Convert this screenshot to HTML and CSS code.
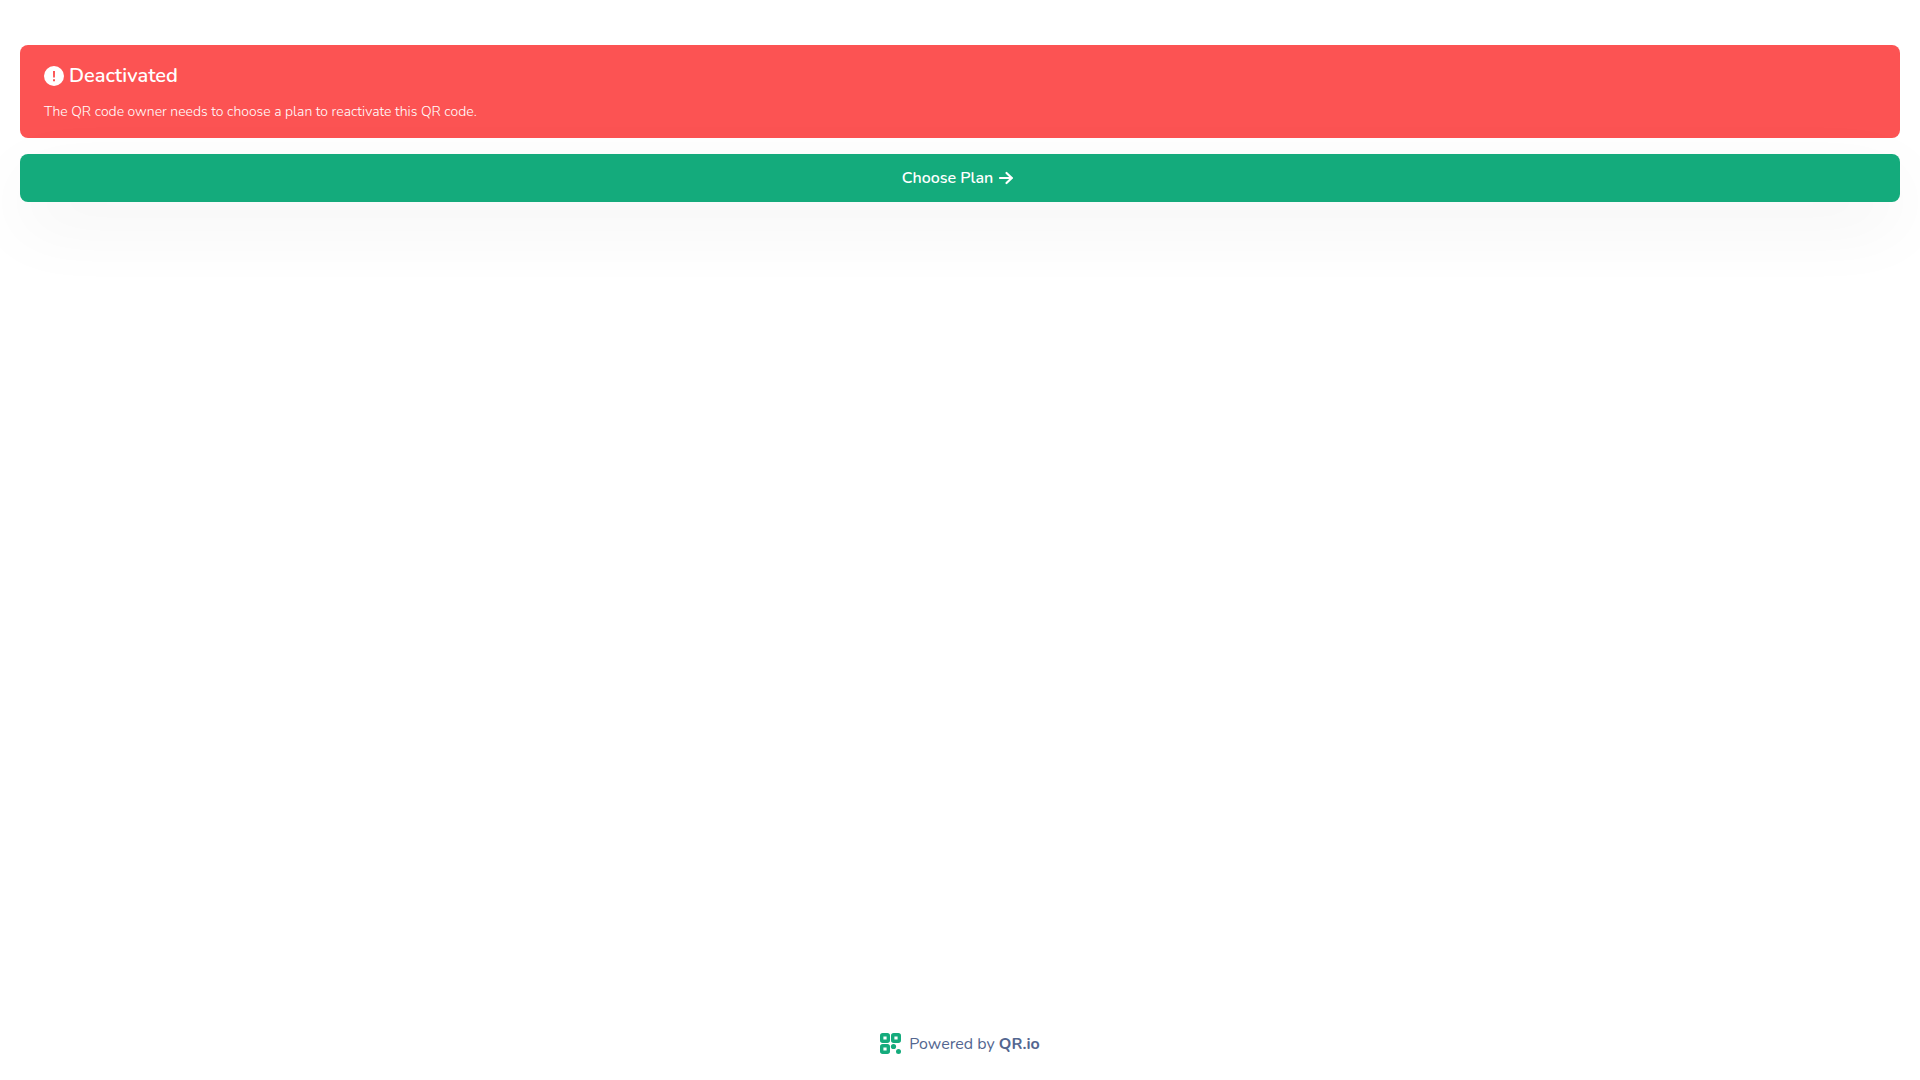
FILE: index.html
```html
<!DOCTYPE html>
<html lang="en">
<head>
<meta charset="utf-8">
<meta name="viewport" content="width=device-width, initial-scale=1">
<title>QR code deactivated</title>
<link rel="stylesheet" href="styles.css">
</head>
<body>
<main class="content">
  <section class="alert" role="alert">
    <h1 class="alert-title">
      <svg class="alert-icon" viewBox="0 0 20 20" aria-hidden="true">
        <circle cx="10" cy="10" r="10" fill="#fff"/>
        <path d="M9 5h2l-.1 6.500H9.100zM9 13.200h2v2H9z" fill="#fc5353"/>
      </svg>
      Deactivated
    </h1>
    <p class="alert-text">The QR code owner needs to choose a plan to reactivate this QR code.</p>
  </section>
  <button class="plan-button" type="button">
    Choose Plan
    <svg class="arrow" viewBox="0 0 16 14" aria-hidden="true">
      <path d="M2 7h12M8.500 2l5.300 5-5.300 5" fill="none" stroke="#fff" stroke-width="2.200" stroke-linecap="round" stroke-linejoin="round"/>
    </svg>
  </button>
</main>
<footer class="footer">
  <a class="brand" href="#">
    <svg class="logo" viewBox="0 0 21 22" aria-hidden="true">
      <g fill="none" stroke="#14ab7c" stroke-width="3.400">
        <rect x="1.700" y="1.700" width="6.600" height="6.600" rx="1"/>
        <rect x="12.700" y="1.700" width="6.600" height="6.600" rx="1"/>
        <rect x="1.700" y="12.700" width="6.600" height="6.600" rx="1"/>
      </g>
      <g fill="#14ab7c">
        <circle cx="13.500" cy="13.500" r="2.600"/>
        <circle cx="18.500" cy="18.500" r="2.500"/>
      </g>
    </svg>
    <span>Powered by <strong>QR.io</strong></span>
  </a>
</footer>
</body>
</html>
```

FILE: styles.css
```css
* {
  box-sizing: border-box;
}

body {
  display: flex;
  flex-direction: column;
  min-height: 100vh;
  margin: 0;
  background: #fff;
  font-family: Nunito, Lato, sans-serif;
  font-size: 16px;
  line-height: 24px;
}

.content {
  display: flex;
  flex: 1;
  flex-direction: column;
  gap: 16px;
  padding: 45px 20px 0;
}

.alert {
  padding: 17px 24px 14px;
  border-radius: 8px;
  background: #fc5353;
  color: #fff;
}

.alert-title {
  display: flex;
  align-items: center;
  gap: 5px;
  margin: 0 0 10px;
  font-size: 20px;
  font-weight: 600;
  line-height: 28px;
}

.alert-icon {
  width: 20px;
  height: 20px;
}

.alert-text {
  margin: 0;
  font-size: 14px;
  font-weight: 300;
}

.plan-button {
  display: flex;
  align-items: center;
  justify-content: center;
  gap: 5px;
  width: 100%;
  padding: 12px 28px 12px 24px;
  border: 0;
  border-radius: 8px;
  background: #14ab7c;
  box-shadow: 0 24px 72px rgba(20, 40, 35, 0.05);
  color: #fff;
  font: inherit;
  font-weight: 600;
  cursor: pointer;
}

.arrow {
  width: 16px;
  height: 14px;
}

.footer {
  display: flex;
  justify-content: center;
  padding: 24px;
}

.brand {
  display: flex;
  align-items: center;
  gap: 8px;
  color: #536690;
  text-decoration: none;
}

.logo {
  width: 21px;
  height: 22px;
}
```
